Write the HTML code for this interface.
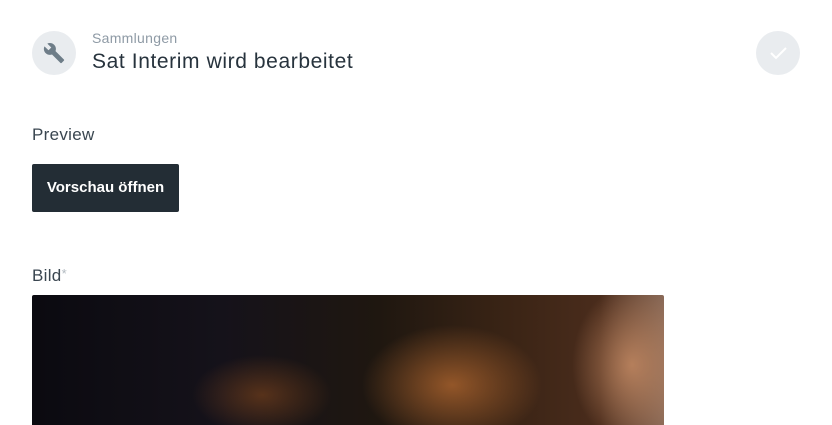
<!DOCTYPE html>
<html><head><style>
body{margin:0;background:#fff;font-family:"Liberation Sans",sans-serif;width:832px;height:425px;overflow:hidden;position:relative}
.ic{position:absolute;left:32px;top:31px;width:44px;height:44px;border-radius:50%;background:#e9ecef}
.ck{position:absolute;left:756px;top:31px;width:44px;height:44px;border-radius:50%;background:#e9ecef}
.sub{position:absolute;left:92px;top:30px;font-size:14px;color:#8e9aa5;letter-spacing:.3px}
.ttl{position:absolute;left:92px;top:50px;font-size:21px;color:#27333d;letter-spacing:.6px}
.lbl{position:absolute;left:32px;font-size:17px;color:#3a4650;letter-spacing:.3px}
.btn{position:absolute;left:32px;top:164px;width:147px;height:48px;background:#232d35;border-radius:2px;color:#fff;font-size:15px;font-weight:bold;line-height:48px;text-align:center}
.img{position:absolute;left:32px;top:295px;width:632px;height:130px;border-radius:2px 2px 0 0;
background:
radial-gradient(ellipse 60px 80px at 600px 70px,rgba(200,140,100,.8),transparent),
radial-gradient(ellipse 90px 60px at 420px 90px,rgba(190,110,50,.7),transparent),
radial-gradient(ellipse 70px 40px at 230px 100px,rgba(150,80,30,.5),transparent),
linear-gradient(90deg,#0b0a10 0%,#15121a 30%,#1f1710 55%,#3a2415 75%,#4a2c1c 90%,#8a6a58 100%)}
</style></head><body>
<div class="ic"><svg width="44" height="44" viewBox="0 0 44 44"><g transform="translate(11 11) scale(0.92)"><path d="M22.7 19l-9.1-9.1c.9-2.3.4-5-1.5-6.9-2-2-5-2.4-7.4-1.3L9 6 6 9 1.6 4.7C.4 7.1.9 10.1 2.9 12.1c1.9 1.9 4.6 2.4 6.9 1.5l9.1 9.1c.4.4 1 .4 1.4 0l2.3-2.3c.5-.4.5-1.1.1-1.4z" fill="#6e7d88"/></g></svg></div>
<div class="sub">Sammlungen</div>
<div class="ttl">Sat Interim wird bearbeitet</div>
<div class="ck"><svg width="44" height="44" viewBox="0 0 44 44"><path d="M15 22 l5 5 l10 -10" fill="none" stroke="#fff" stroke-width="2"/></svg></div>
<div class="lbl" style="top:125px">Preview</div>
<div class="btn">Vorschau öffnen</div>
<div class="lbl" style="top:266px">Bild<span style="color:#b0b8bf;font-size:13px;vertical-align:top">*</span></div>
<div class="img"></div>
</body></html>
